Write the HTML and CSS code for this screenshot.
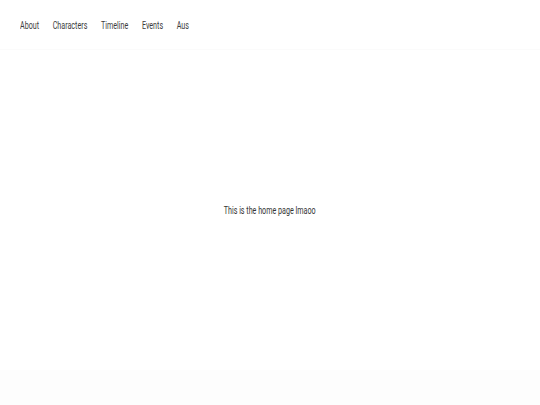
FILE: index.html
```html
<!DOCTYPE html>
<html>
<head>
<meta charset="utf-8">
<link rel="stylesheet" href="styles.css">
</head>
<body>
<div class="page">
  <nav class="nav">
    <div class="nav-inner">
      <a class="nav-link" href="#">About</a>
      <a class="nav-link" href="#">Characters</a>
      <a class="nav-link" href="#">Timeline</a>
      <a class="nav-link" href="#">Events</a>
      <a class="nav-link" href="#">Aus</a>
    </div>
  </nav>
  <main class="main">
    <p class="home-text">This is the home page lmaoo</p>
  </main>
</div>
</body>
</html>
```
FILE: styles.css
```css
html, body {
  margin: 0;
  padding: 0;
}
body {
  background: #fdfdfd;
  font-family: Roboto, "Liberation Sans", sans-serif;
  color: #333;
}
.page {
  height: 370px;
  background: #fff;
  box-shadow: 0 1px 3px rgba(0,0,0,0.18), 0 3px 6px rgba(0,0,0,0.06);
  display: flex;
  flex-direction: column;
}
.nav {
  height: 49px;
  border-bottom: 1px solid #fbfbfb;
  padding-left: 20px;
  display: flex;
  align-items: center;
}
.nav-inner {
  display: flex;
  gap: 21px;
  transform: scaleX(0.65);
  transform-origin: left center;
  padding-top: 1px;
}
.nav-link {
  font-size: 11px;
  color: #3c3c3c;
  text-decoration: none;
}
.main {
  flex: 1;
  display: flex;
  align-items: center;
  justify-content: center;
  background: #fff;
}
.home-text {
  margin: 0;
  font-size: 11px;
  color: #333;
  transform: scaleX(0.65);
}
```
